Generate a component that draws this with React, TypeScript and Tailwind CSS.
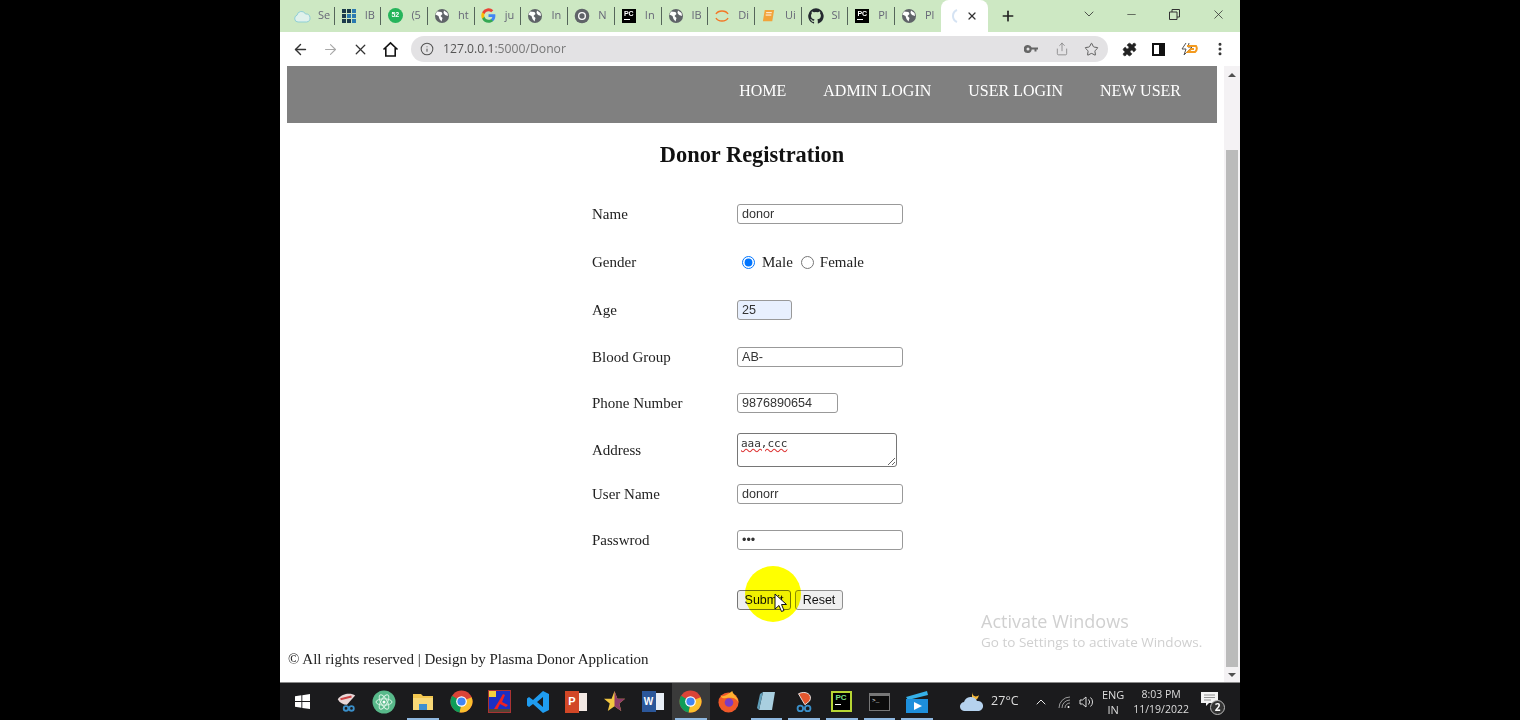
import React from "react";
import { ArrowLeft, ArrowRight, X, Plus, ChevronDown, ChevronUp, Minus, Info, Star, Share, Puzzle, MoreVertical } from "lucide-react";

const Globe = () => (
  <svg width="16" height="16" viewBox="0 0 16 16">
    <circle cx="8" cy="8" r="7" fill="#5f6368" />
    <path d="M3 3.5 L7.5 4 L8.5 6 L6.5 8 L8.5 10 L7.5 13.5 L5.5 11 L4.5 8 L1.5 6.5 Z" fill="#fff" />
    <path d="M10 2.5 L13.5 5 L14 8 L11 7 L9.5 5 Z" fill="#fff" />
  </svg>
);

const ChromeIcon = ({ size = 16 }: { size?: number }) => (
  <svg width={size} height={size} viewBox="0 0 24 24">
    <circle cx="12" cy="12" r="11.5" fill="#db4437" />
    <path d="M12 12 L22.5 7.5 A11.5 11.5 0 0 1 10 23.4 Z" fill="#fbc02d" />
    <path d="M12 12 L10 23.4 A11.5 11.5 0 0 1 2.2 6 Z" fill="#0f9d58" />
    <circle cx="12" cy="12" r="5.6" fill="#fff" />
    <circle cx="12" cy="12" r="4.3" fill="#4285f4" />
  </svg>
);

const GrayChrome = () => (
  <svg width="16" height="16" viewBox="0 0 24 24">
    <circle cx="12" cy="12" r="11" fill="#5f6368" />
    <circle cx="12" cy="12" r="6" fill="#fff" />
    <circle cx="12" cy="12" r="4" fill="#5f6368" />
  </svg>
);

const Pc = () => (
  <div className="w-[14px] h-[14px] bg-black flex flex-col items-center pt-[1px]">
    <span className="text-white text-[7px] leading-[8px] font-bold font-['Liberation_Sans',sans-serif]">PC</span>
    <span className="w-[6px] h-[1px] bg-white mt-[1px] self-start ml-[2px]" />
  </div>
);

const favicons: Record<string, React.ReactNode> = {
  cloud: (
    <svg width="18" height="16" viewBox="0 0 18 16">
      <path d="M5 14 A3.5 3.5 0 0 1 4 7.2 A4.5 4.5 0 0 1 12.5 6 A4 4 0 0 1 13.5 14 Z" fill="#e0f1ec" stroke="#8fcfd6" strokeWidth="1" />
    </svg>
  ),
  grid: (
    <div className="grid grid-cols-3 gap-[1px] w-[14px] h-[14px]">
      {["#1b3a4b", "#1b3a4b", "#2a7ab0", "#1b3a4b", "#2a7ab0", "#2a7ab0", "#1b3a4b", "#1b3a4b", "#2a7ab0"].map((c, i) => (
        <span key={i} style={{ background: c }} />
      ))}
    </div>
  ),
  whatsapp: (
    <div className="w-[15px] h-[15px] rounded-full bg-[#25b45b] text-white text-[7px] font-bold flex items-center justify-center font-['Liberation_Sans',sans-serif]">
      52
    </div>
  ),
  globe: <Globe />,
  google: (
    <svg width="15" height="15" viewBox="0 0 24 24">
      <path d="M23 12.3c0-.8-.1-1.600-.2-2.300H12v4.400h6.200a5.300 5.300 0 0 1-2.300 3.500v2.900h3.700c2.200-2 3.400-5 3.400-8.500z" fill="#4285f4" />
      <path d="M12 23.500c3.100 0 5.700-1 7.600-2.800l-3.700-2.900c-1 .7-2.300 1.100-3.900 1.100-3 0-5.500-2-6.400-4.800H1.800v3A11.500 11.500 0 0 0 12 23.500z" fill="#34a853" />
      <path d="M5.600 14.100a6.900 6.900 0 0 1 0-4.400v-3H1.800a11.500 11.500 0 0 0 0 10.400z" fill="#fbbc05" />
      <path d="M12 5c1.700 0 3.200.6 4.400 1.700l3.300-3.300A11.500 11.500 0 0 0 1.800 6.700l3.800 3C6.500 7 9 5 12 5z" fill="#ea4335" />
    </svg>
  ),
  graychrome: <GrayChrome />,
  pc: <Pc />,
  jupyter: (
    <svg width="16" height="16" viewBox="0 0 16 16" fill="none">
      <path d="M2 6 A6.500 5 0 0 1 14 6" stroke="#f37726" strokeWidth="1.500" />
      <path d="M2 10 A6.500 5 0 0 0 14 10" stroke="#f37726" strokeWidth="1.500" />
    </svg>
  ),
  book: (
    <svg width="15" height="15" viewBox="0 0 16 16">
      <path d="M4 2 H14 L12 14 H2 Z" fill="#f2a33a" />
      <path d="M5.500 5 H11.500 M5 7.500 H11" stroke="#fff" strokeWidth="1" />
    </svg>
  ),
  github: (
    <svg width="16" height="16" viewBox="0 0 24 24" fill="#24292f">
      <path d="M12 .5a11.700 11.700 0 0 0-3.700 22.800c.6.100.8-.3.800-.6v-2c-3.300.7-4-1.600-4-1.600-.5-1.400-1.300-1.800-1.300-1.800-1.100-.7.100-.7.100-.7 1.200.1 1.800 1.200 1.800 1.200 1 1.800 2.800 1.300 3.400 1 .1-.8.400-1.300.8-1.600-2.600-.3-5.400-1.300-5.400-5.800 0-1.300.5-2.300 1.200-3.100-.1-.3-.5-1.500.1-3.100 0 0 1-.3 3.200 1.200a11 11 0 0 1 5.800 0c2.200-1.500 3.200-1.200 3.200-1.200.6 1.600.2 2.800.1 3.100.8.800 1.200 1.900 1.200 3.100 0 4.500-2.700 5.500-5.400 5.800.4.400.8 1.100.8 2.200v3.300c0 .3.200.7.800.6A11.700 11.700 0 0 0 12 .5z" />
    </svg>
  ),
};

const tabs = [
  { icon: "cloud", label: "Se" },
  { icon: "grid", label: "IB" },
  { icon: "whatsapp", label: "(5" },
  { icon: "globe", label: "ht" },
  { icon: "google", label: "ju" },
  { icon: "globe", label: "In" },
  { icon: "graychrome", label: "N" },
  { icon: "pc", label: "In" },
  { icon: "globe", label: "IB" },
  { icon: "jupyter", label: "Di" },
  { icon: "book", label: "Ui" },
  { icon: "github", label: "Sl" },
  { icon: "pc", label: "Pl" },
  { icon: "globe", label: "Pl" },
];

const inputCls =
  "h-[20px] border border-[#999] rounded-[3px] px-[4px] text-[12.6px] text-[#333] font-['Liberation_Sans',sans-serif] outline-none";

const Row = ({ label, h, children }: { label: string; h: string; children: React.ReactNode }) => (
  <div className={`flex items-center ${h}`}>
    <span className="w-[145px] text-[15px] text-[#222]">{label}</span>
    {children}
  </div>
);

const Tile = ({ children, running, active, narrow }: { children: React.ReactNode; running?: boolean; active?: boolean; narrow?: boolean }) => (
  <div className={`relative ${narrow ? "w-[37.7px]" : "w-[38.3px]"} h-full flex items-center justify-center ${active ? "bg-[#3a3a3a]" : ""}`}>
    {children}
    {running && <span className="absolute bottom-0 left-[3px] right-[3px] h-[2px] bg-[#8fb8e0]" />}
  </div>
);

const Taskbar = () => (
  <div className="h-[38px] bg-[#1b1b1d] border-t border-[#8a8a8a] flex items-center text-[#e8e8e8] font-['Open_Sans',sans-serif]">
    <div className="w-[44px] flex justify-center">
      <svg width="15" height="15" viewBox="0 0 16 16" fill="#fff">
        <path d="M0 2.300 L6.800 1.300 V7.500 H0 Z M7.800 1.200 L16 0 V7.500 H7.800 Z M0 8.500 H6.800 V14.700 L0 13.700 Z M7.800 8.500 H16 V16 L7.800 14.800 Z" />
      </svg>
    </div>
    <div className="flex h-full ml-[3px]">
      <Tile>
        <svg width="22" height="22" viewBox="0 0 24 24">
          <path d="M3 9 C8 2 18 2 22 5 L13 15 C9 15 5 13 3 9 Z" fill="#e8d6d6" />
          <path d="M6 9 L18 6" stroke="#c44" strokeWidth="2" />
          <circle cx="12" cy="19" r="2.500" fill="none" stroke="#3a8fc9" strokeWidth="2" />
          <circle cx="18" cy="19" r="2.500" fill="none" stroke="#3a8fc9" strokeWidth="2" />
        </svg>
      </Tile>
      <Tile>
        <svg width="24" height="24" viewBox="0 0 24 24">
          <circle cx="12" cy="12" r="11.500" fill="#58b98a" />
          <g fill="none" stroke="#d8f3e4" strokeWidth="1">
            <ellipse cx="12" cy="12" rx="8" ry="3.200" />
            <ellipse cx="12" cy="12" rx="8" ry="3.200" transform="rotate(60 12 12)" />
            <ellipse cx="12" cy="12" rx="8" ry="3.200" transform="rotate(120 12 12)" />
          </g>
          <circle cx="12" cy="12" r="1.500" fill="#fff" />
        </svg>
      </Tile>
      <Tile running>
        <svg width="22" height="20" viewBox="0 0 22 20">
          <path d="M1 2 H9 L11 4 H21 V18 H1 Z" fill="#f3c74f" />
          <rect x="1" y="6" width="20" height="12" fill="#f8d978" />
          <rect x="7" y="12" width="8" height="6" fill="#3d8fd1" />
        </svg>
      </Tile>
      <Tile>
        <ChromeIcon size={23} />
      </Tile>
      <Tile>
        <div className="w-[23px] h-[23px] bg-[#1b2fc4] border border-[#a33] flex items-center justify-center overflow-hidden">
          <svg width="21" height="21" viewBox="0 0 21 21">
            <rect x="0" y="0" width="7" height="6" fill="#f4d13d" />
            <path d="M5 18 L10 10 L14 3 L16 4 L13 11 L19 14 L17 16 L11 13 L8 19 Z" fill="#e22" />
            <rect x="0" y="18" width="21" height="3" fill="#543" />
          </svg>
        </div>
      </Tile>
      <Tile>
        <svg width="24" height="24" viewBox="0 0 24 24">
          <path d="M17 1 L23 4 V20 L17 23 L7 14 L3 17 L1 15.500 V8.500 L3 7 L7 10 Z M17 7 L11 12 L17 17 Z" fill="#1f9cf0" />
        </svg>
      </Tile>
      <Tile>
        <div className="w-[22px] h-[22px] flex">
          <div className="w-[14px] h-[22px] bg-[#d24726] text-white text-[11px] font-bold flex items-center justify-center font-['Liberation_Sans',sans-serif]">P</div>
          <div className="flex-1 bg-[#f3e9e4] my-[2px]" />
        </div>
      </Tile>
      <Tile>
        <svg width="23" height="23" viewBox="0 0 24 24">
          <path d="M12 1 L15 9 L23 9 L17 14 L19 22 L12 17 L5 22 L7 14 L1 9 L9 9 Z" fill="#f2c641" />
          <path d="M12 1 L15 9 L23 9 L17 14 L19 22 L12 17 Z" fill="#8c3a6a" />
        </svg>
      </Tile>
      <Tile>
        <div className="w-[22px] h-[21px] flex">
          <div className="w-[14px] bg-[#2b579a] text-white text-[10px] font-bold flex items-center justify-center font-['Liberation_Sans',sans-serif]">W</div>
          <div className="flex-1 bg-[#e8eef6] my-[2px]" />
        </div>
      </Tile>
      <Tile running active>
        <ChromeIcon size={23} />
      </Tile>
      <Tile narrow>
        <svg width="23" height="23" viewBox="0 0 24 24">
          <circle cx="12" cy="13" r="10.500" fill="#f0592a" />
          <path d="M4 6 C8 8 14 2 16 1 C16 4 22 7 22.500 13 C20 8 16 8 13 8 C8 8 5 10 4 6 Z" fill="#ffb030" />
          <circle cx="12.500" cy="13" r="4.500" fill="#7b3cc4" />
        </svg>
      </Tile>
      <Tile running narrow>
        <svg width="20" height="22" viewBox="0 0 20 22">
          <path d="M6 1 H18 L15 19 H2 Z" fill="#a9cfe0" />
          <path d="M2 19 L6 1 L3 3 L0 17 Z" fill="#5f9db8" />
        </svg>
      </Tile>
      <Tile running narrow>
        <svg width="22" height="24" viewBox="0 0 24 24">
          <path d="M6 3 C14 -1 22 4 18 11 L13 15 L10 10 Z" fill="#e4572e" stroke="#eee" strokeWidth="1" />
          <circle cx="8" cy="19" r="3" fill="none" stroke="#3a8fc9" strokeWidth="2" />
          <circle cx="16" cy="19" r="3" fill="none" stroke="#3a8fc9" strokeWidth="2" />
        </svg>
      </Tile>
      <Tile running narrow>
        <div className="w-[21px] h-[21px] bg-[#b6d534] p-[2px]">
          <div className="w-full h-full bg-black flex flex-col pl-[2px]">
            <span className="text-[#7fe08a] text-[8px] leading-[10px] font-bold font-['Liberation_Sans',sans-serif]">PC</span>
            <span className="w-[6px] h-[1px] bg-white mt-[1px]" />
          </div>
        </div>
      </Tile>
      <Tile running narrow>
        <div className="w-[21px] h-[18px] bg-[#0c0c0c] border border-[#777] border-t-[3px] relative">
          <span className="absolute top-[2px] left-[2px] text-[6px] leading-[6px] text-white font-['Liberation_Mono',monospace]">&gt;_</span>
        </div>
      </Tile>
      <Tile running narrow>
        <svg width="24" height="24" viewBox="0 0 24 24">
          <path d="M1 7 L22 1 L23 5 L3 10 Z" fill="#35b0e8" />
          <rect x="1" y="9" width="22" height="14" fill="#1d8fdc" />
          <path d="M9 12 L17 16 L9 20 Z" fill="#fff" />
        </svg>
      </Tile>
    </div>
    <div className="ml-[23px] w-[26px] flex justify-center">
      <svg width="26" height="24" viewBox="0 0 26 24">
        <path d="M13 2 C13 6 17 8 20 5 C19 10 15 11 13 10 Z" fill="#f3b73a" />
        <path d="M6 21 A4.500 4.500 0 0 1 5 12 A7 7 0 0 1 18 11 A5 5 0 0 1 20 21 Z" fill="#b5d2ee" />
      </svg>
    </div>
    <span className="ml-[6px] text-[12.5px] text-[#ddd] w-[34px]">27°C</span>
    <ChevronUp size={16} strokeWidth={1.5} className="ml-[8px]" />
    <svg className="ml-[8px]" width="14" height="14" viewBox="0 0 14 14" fill="none" stroke="#bbb" strokeWidth="0.800">
      <path d="M2 13 A11 11 0 0 1 13 2 M5 13 A8 8 0 0 1 13 5 M8 13 A5 5 0 0 1 13 8" />
      <circle cx="11.500" cy="12" r="1" fill="#fff" stroke="none" />
    </svg>
    <svg className="ml-[8px]" width="16" height="14" viewBox="0 0 16 14" fill="none" stroke="#ddd" strokeWidth="1">
      <path d="M1 5 H3.500 L7 2 V12 L3.500 9 H1 Z M9.500 4.500 A3.500 3.500 0 0 1 9.500 9.500 M11.500 2.500 A6 6 0 0 1 11.500 11.500" />
    </svg>
    <div className="ml-0 w-[36px] flex flex-col items-center text-[11px] leading-[15px] text-[#ddd]">
      <span>ENG</span>
      <span>IN</span>
    </div>
    <div className="w-[60px] flex flex-col items-center text-[10.5px] leading-[15px] text-[#ddd]">
      <span>8:03 PM</span>
      <span>11/19/2022</span>
    </div>
    <div className="ml-[9px] relative w-[22px] h-[22px]">
      <svg width="17" height="15" viewBox="0 0 17 15" className="absolute left-[1px] top-[1px]">
        <path d="M0 0 H17 V11 H8 L5 14 V11 H0 Z" fill="#f3f3f3" />
        <path d="M3 3 H14 M3 5.500 H14 M3 8 H10" stroke="#777" strokeWidth="0.800" />
      </svg>
      <span className="absolute right-[-3px] bottom-[-2px] w-[15px] h-[15px] rounded-full border border-[#bbb] bg-[#333] text-[10px] leading-[13px] text-center text-white font-bold">2</span>
    </div>
  </div>
);

export default function App() {
  return (
    <div className="w-[1520px] h-[720px] bg-black flex justify-center overflow-hidden">
      <div className="w-[960px] h-full flex flex-col bg-white">
        {/* Tab strip */}
        <div className="h-[32px] bg-[#cde8c3] flex items-end pl-[8px] font-['Open_Sans',sans-serif]">
          {tabs.map((t, i) => (
            <div key={i} className="w-[46.7px] h-[32px] flex items-center relative pl-[5px] pb-[1px]">
              <span className="w-[18px] flex justify-center">{favicons[t.icon]}</span>
              <span className="ml-[7px] text-[11px] text-[#667] w-[14px]">{t.label}</span>
              {i < tabs.length - 1 && <span className="absolute right-0 top-[7px] h-[18px] w-[1px] bg-[#55655a]" />}
            </div>
          ))}
          <div className="w-[47px] h-[32px] bg-white rounded-t-[8px] flex items-center pl-[6px] gap-[3px] ml-[-1px]">
            <svg width="16" height="16" viewBox="0 0 16 16" fill="none">
              <path d="M10 2 A6.500 6.500 0 0 0 10 14" stroke="#d5e3f3" strokeWidth="2" />
            </svg>
            <X size={12} strokeWidth={2.5} className="text-[#333]" />
          </div>
          <div className="w-[40px] h-[32px] flex items-center justify-center">
            <Plus size={16} strokeWidth={2.5} className="text-[#222]" />
          </div>
          <div className="flex-1 flex items-center h-[32px] text-[#333] pb-[4px]">
            <ChevronDown size={16} strokeWidth={1.25} className="ml-[53px]" />
            <Minus size={13} strokeWidth={1.25} className="ml-[28px]" />
            <svg className="ml-[31px]" width="11" height="11" viewBox="0 0 11 11" fill="none" stroke="#333">
              <path d="M.5 3 H8 V10.500 H.5 Z M3 3 V.5 H10.500 V8 H8" />
            </svg>
            <X size={15} strokeWidth={1.25} className="ml-[31px]" />
          </div>
        </div>

        {/* Toolbar */}
        <div className="h-[34px] bg-white flex items-center text-[#333] shrink-0">
          <ArrowLeft size={17} strokeWidth={2} className="ml-[12px]" />
          <ArrowRight size={17} strokeWidth={1.5} className="ml-[13px] text-[#a8a8a8]" />
          <X size={17} strokeWidth={1.75} className="ml-[13px]" />
          <svg className="ml-[13px]" width="17" height="17" viewBox="0 0 17 17" fill="none" stroke="#111" strokeWidth="1.600">
            <path d="M1.500 8.500 L8.500 1.800 L15.500 8.500 M3.800 7 V15 H13.200 V7" />
          </svg>
          <div className="ml-[12px] w-[697px] h-[26px] rounded-full bg-[#e3e2e4] flex items-center pl-[9px] pr-[9px] font-['Open_Sans',sans-serif]">
            <Info size={14} strokeWidth={1.75} className="text-[#555]" />
            <span className="ml-[9px] text-[12.2px] text-[#555]">
              127.0.0.1<span className="text-[#777]">:5000/Donor</span>
            </span>
            <svg className="ml-auto" width="14" height="8" viewBox="0 0 14 8" fill="#666">
              <path d="M4 0 A4 4 0 0 1 7.700 2.500 H14 V4.500 H12.500 V6.500 H10.500 V4.500 H7.700 A4 4 0 1 1 4 0 Z M4 2.500 A1.500 1.500 0 1 0 4 5.500 A1.500 1.500 0 1 0 4 2.500 Z" />
            </svg>
            <Share size={14} strokeWidth={1.25} className="ml-[17px] text-[#777]" />
            <Star size={15} strokeWidth={1.5} className="ml-[15px] text-[#555]" />
          </div>
          <Puzzle size={15} fill="#222" strokeWidth={1} className="ml-[14px] text-[#222]" />
          <div className="ml-[15px] w-[13px] h-[13px] border-2 border-[#111] flex justify-end">
            <span className="w-[4px] h-full bg-[#111]" />
          </div>
          <svg className="ml-[14px]" width="20" height="20" viewBox="0 0 20 20" fill="none">
            <path d="M7 4 L3 10 H7 L5 16 L13 8 H9 L10 4" stroke="#555" strokeWidth="1" />
            <path d="M8 7 H17 Q19 10 16 13 H9 L12 10 H15" stroke="#f39a1f" strokeWidth="2" />
          </svg>
          <MoreVertical size={16} strokeWidth={2.5} className="ml-[13px] text-[#333]" />
        </div>

        {/* Page viewport */}
        <div className="flex-1 flex min-h-0 relative font-['Liberation_Serif',serif]">
          <div className="flex-1 pl-[7px] pr-[7px] flex flex-col">
            <div className="h-[57px] bg-[#808080] flex justify-end items-start pt-[16px] pr-[36px] gap-[37px] text-[16px] leading-[18px] text-white">
              <span>HOME</span>
              <span>ADMIN LOGIN</span>
              <span>USER LOGIN</span>
              <span>NEW USER</span>
            </div>
            <h1 className="text-[22.4px] font-bold text-center text-[#111] mt-[20px] leading-[24px]">Donor Registration</h1>
            <div className="ml-[305px] mt-[24px] flex flex-col">
              <Row label="Name" h="h-[47px]">
                <input readOnly value="donor" className={`${inputCls} mb-[2px] bg-white w-[166px]`} />
              </Row>
              <Row label="Gender" h="h-[48px]">
                <div className="flex items-center pl-[5px]">
                  <input type="radio" readOnly checked className="w-[13px] h-[13px] accent-[#0075ff] m-0" />
                  <span className="ml-[7px] text-[15px] text-[#222]">Male</span>
                  <input type="radio" readOnly checked={false} className="ml-[8px] w-[13px] h-[13px] m-0" />
                  <span className="ml-[6px] text-[15px] text-[#222]">Female</span>
                </div>
              </Row>
              <Row label="Age" h="h-[48px]">
                <input readOnly value="25" className={`${inputCls} mb-[1px] bg-[#e8f0fe] w-[55px]`} />
              </Row>
              <Row label="Blood Group" h="h-[46px]">
                <input readOnly value="AB-" className={`${inputCls} bg-white w-[166px]`} />
              </Row>
              <Row label="Phone Number" h="h-[46px]">
                <input readOnly value="9876890654" className={`${inputCls} bg-white w-[101px]`} />
              </Row>
              <Row label="Address" h="h-[48px]">
                <textarea
                  readOnly
                  value="aaa,ccc"
                  className="w-[160px] h-[34px] mb-[1px] border border-[#767676] rounded-[3px] px-[3px] py-[2px] text-[11px] leading-[15px] bg-white text-[#333] underline decoration-wavy decoration-[#d33] font-['DejaVu_Sans_Mono',monospace] outline-none"
                />
              </Row>
              <Row label="User Name" h="h-[40px]">
                <input readOnly value="donorr" className={`${inputCls} bg-white w-[166px]`} />
              </Row>
              <Row label="Passwrod" h="h-[52px]">
                <input readOnly type="password" value="aaa" className={`${inputCls} mb-[1px] bg-white w-[166px]`} />
              </Row>
              <div className="flex pl-[145px] gap-[4px] mt-[24px]">
                <button className="w-[54px] h-[20px] border border-[#767676] rounded-[3px] bg-[#efefef] text-[12.5px] leading-[18px] text-[#111] font-['Liberation_Sans',sans-serif]">Submit</button>
                <button className="w-[48px] h-[20px] border border-[#8f8f8f] rounded-[3px] bg-[#efefef] text-[12.5px] leading-[18px] text-[#111] font-['Liberation_Sans',sans-serif]">Reset</button>
              </div>
            </div>
            <div className="mt-auto mb-[14px] pl-[1px] text-[15px] leading-[18px] text-[#222]">
              © All rights reserved | Design by Plasma Donor Application
            </div>
          </div>

          {/* Scrollbar */}
          <div className="w-[16px] bg-[#f4f2f4] flex flex-col items-center">
            <div className="h-[17px] flex items-center justify-center">
              <span className="w-0 h-0 border-x-[4px] border-x-transparent border-b-[4px] border-b-[#505050]" />
            </div>
            <div className="mt-[67px] w-[12px] flex-1 bg-[#bbbbbb]" />
            <div className="h-[15px] flex items-center justify-center">
              <span className="w-0 h-0 border-x-[4px] border-x-transparent border-t-[4px] border-t-[#505050]" />
            </div>
          </div>

          {/* Watermark */}
          <div className="absolute left-[701px] top-[543px] font-['Open_Sans',sans-serif] text-[#d0d0d0]">
            <div className="text-[18px] leading-[24px]">Activate Windows</div>
            <div className="text-[13.5px] leading-[18px]">Go to Settings to activate Windows.</div>
          </div>

          {/* Click highlight and cursor */}
          <div className="absolute left-[465px] top-[500px] w-[56px] h-[56px] rounded-full bg-[#ffff00] mix-blend-multiply" />
          <svg className="absolute left-[494px] top-[527px]" width="14" height="20" viewBox="0 0 14 20">
            <path d="M1 1 V16 L5 12.500 L7.500 18.500 L10 17.500 L7.500 11.500 H12.500 Z" fill="#fff" stroke="#111" strokeWidth="1" />
          </svg>
        </div>

        <Taskbar />
      </div>
    </div>
  );
}
